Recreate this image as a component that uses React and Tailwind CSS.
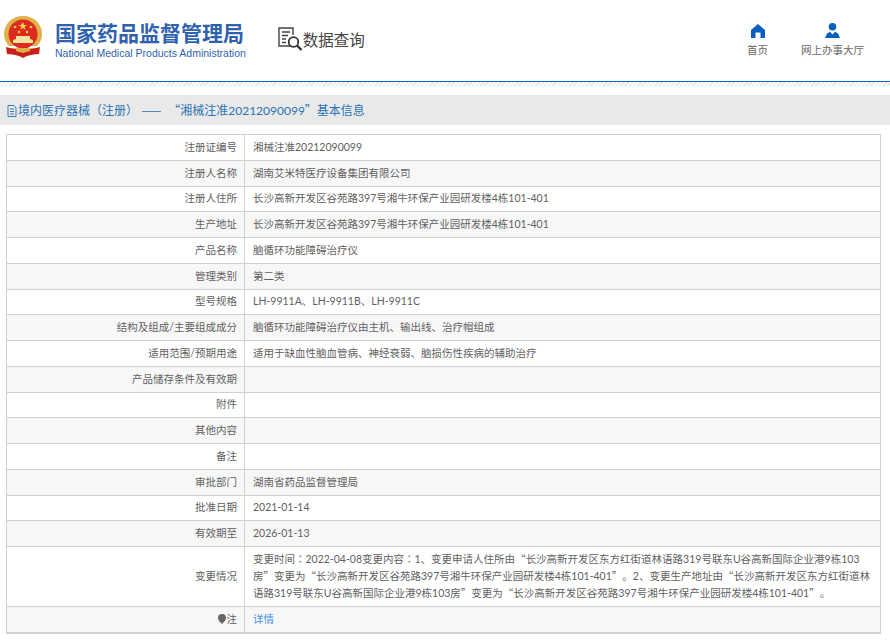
const font = { fontFamily: 'Lato, "Noto Sans CJK SC", sans-serif' };

const rows = [
  ["注册证编号", "湘械注准20212090099"],
  ["注册人名称", "湖南艾米特医疗设备集团有限公司"],
  ["注册人住所", "长沙高新开发区谷苑路397号湘牛环保产业园研发楼4栋101-401"],
  ["生产地址", "长沙高新开发区谷苑路397号湘牛环保产业园研发楼4栋101-401"],
  ["产品名称", "脑循环功能障碍治疗仪"],
  ["管理类别", "第二类"],
  ["型号规格", "LH-9911A、LH-9911B、LH-9911C"],
  ["结构及组成/主要组成成分", "脑循环功能障碍治疗仪由主机、输出线、治疗帽组成"],
  ["适用范围/预期用途", "适用于缺血性脑血管病、神经衰弱、脑损伤性疾病的辅助治疗"],
  ["产品储存条件及有效期", ""],
  ["附件", ""],
  ["其他内容", ""],
  ["备注", ""],
  ["审批部门", "湖南省药品监督管理局"],
  ["批准日期", "2021-01-14"],
  ["有效期至", "2026-01-13"],
];

// full width punctuation has to come from the CJK font, Lato's is narrow
function Cjk({ children }) {
  return <span className="font-['Noto_Sans_CJK_SC'] leading-none">{children}</span>;
}

function Colon() {
  return <span className="font-['Noto_Sans_CJK_TC'] leading-none">：</span>;
}

const changeText = (
  <>
    变更时间<Colon />2022-04-08变更内容<Colon />1、变更申请人住所由<Cjk>“</Cjk>长沙高新开发区东方红街道林语路319号联东U谷高新国际企业港9栋103房<Cjk>”</Cjk>变更为<Cjk>“</Cjk>长沙高新开发区谷苑路397号湘牛环保产业园研发楼4栋101-401<Cjk>”。</Cjk>2、变更生产地址由<Cjk>“</Cjk>长沙高新开发区东方红街道林语路319号联东U谷高新国际企业港9栋103房<Cjk>”</Cjk>变更为<Cjk>“</Cjk>长沙高新开发区谷苑路397号湘牛环保产业园研发楼4栋101-401<Cjk>”。</Cjk>
  </>
);

function Emblem() {
  return (
    <svg width="40" height="42" viewBox="0 0 40 42" className="shrink-0">
      <path d="M6 30C2 26 1 22 1 18 1 8 9 0 20 0s19 8 19 18c0 4-1 8-5 12z" fill="#e0b04a" />
      <circle cx="20" cy="18" r="14.500" fill="#dc2a1e" />
      <path d="M20 6l1 3h3l-2.400 1.800 1 3-2.600-1.800-2.600 1.800 1-3L15 9h3z" fill="#f5d04e" />
      <circle cx="12" cy="11" r="1.300" fill="#f5d04e" />
      <circle cx="28" cy="11" r="1.300" fill="#f5d04e" />
      <circle cx="16" cy="16" r="1.200" fill="#f5d04e" />
      <circle cx="24" cy="16" r="1.200" fill="#f5d04e" />
      <path d="M10 27h20v-3l-3-1v-3H13v3l-3 1z" fill="#f4e3a0" />
      <path d="M3 31c5 2 10 1 17 3 7-2 12-1 17-3l-1 7c-5 0-11 1-16 4-5-3-11-4-16-4z" fill="#c9201a" />
      <path d="M13 32h14v3l-7 2-7-2z" fill="#e0b04a" />
    </svg>
  );
}

function QueryIcon() {
  return (
    <svg width="25" height="25" viewBox="0 0 25 25" fill="none" className="shrink-0">
      <path d="M13 19H1V1h14v7" stroke="#444" strokeWidth="1.400" />
      <path d="M4 5h8M4 8.500h6M4 12h4M4 15.500h4" stroke="#444" strokeWidth="1.400" />
      <circle cx="15.500" cy="15" r="4.800" stroke="#333" strokeWidth="1.800" />
      <path d="M19 18.500l4.500 4.500" stroke="#333" strokeWidth="2.400" />
    </svg>
  );
}

function HomeIcon() {
  return (
    <svg width="14" height="14" viewBox="0 0 14 14">
      <path d="M7 0L14 6V14H9.500V8.500H4.500V14H0V6z" fill="#0b5fc1" />
    </svg>
  );
}

function PersonIcon() {
  return (
    <svg width="15" height="15" viewBox="0 0 15 15">
      <circle cx="7.500" cy="3.800" r="3.800" fill="#0b5fc1" />
      <path d="M0 15L2 10.500 5 8.800 7.500 11.500 10 8.800 13 10.500 15 15z" fill="#0b5fc1" />
    </svg>
  );
}

function DocIcon() {
  return (
    <svg width="10" height="12" viewBox="0 0 10 12" fill="none" className="shrink-0">
      <path d="M1 .5h6l2 2.500v8.500H1z" stroke="#3a7cb8" />
      <path d="M3 4h4M3 6.500h4M3 9h4" stroke="#3a7cb8" />
    </svg>
  );
}

function PinIcon() {
  return (
    <svg width="8" height="10" viewBox="0 0 8 10" className="mr-[1px] inline-block align-[-1px]">
      <path d="M4 0a4 4 0 014 4c0 2-2 4-4 6-2-2-4-4-4-6a4 4 0 014-4z" fill="#666" />
    </svg>
  );
}

function Row({ label, value, odd }) {
  return (
    <tr className={odd ? "h-[25.75px] bg-[#f7f7f7]" : "h-[25.75px] bg-white"}>
      <td className="border border-[#d0d0d0] pr-[7px] text-right align-middle">{label}</td>
      <td className="border border-[#d0d0d0] pl-[8px] pr-2 align-middle">{value}</td>
    </tr>
  );
}

export default function App() {
  return (
    <div className="h-[642px] w-[890px] overflow-hidden bg-white [text-spacing-trim:space-all]" style={font}>
      <header className="flex h-[82px] items-start border-b border-[#0b5fc1]">
        <div className="ml-[3px] mt-[16px]">
          <Emblem />
        </div>
        <div className="ml-[12px] mt-[19px]">
          <div className="font-['Noto_Sans_CJK_SC'] text-[21px] font-bold leading-[27px] text-[#2f62ad]">国家药品监督管理局</div>
          <div className="mt-[1px] font-['Liberation_Sans'] text-[10.5px] leading-[13px] text-[#2f62ad]">National Medical Products Administration</div>
        </div>
        <div className="ml-[32px] mt-[27px] flex items-center">
          <QueryIcon />
          <span className="text-[15.500px] leading-[22px] text-[#444]">数据查询</span>
        </div>
        <nav className="ml-auto mr-[26px] mt-[24px] flex text-[10.5px] text-[#666]">
          <div className="mr-[33px] flex flex-col items-center gap-[6px]">
            <HomeIcon />
            <span className="leading-[13px]">首页</span>
          </div>
          <div className="-mt-[1px] flex flex-col items-center gap-[6px]">
            <PersonIcon />
            <span className="leading-[13px]">网上办事大厅</span>
          </div>
        </nav>
      </header>
      <div className="h-[4px] bg-[repeating-linear-gradient(135deg,#e4e4e4_0,#e4e4e4_1px,#ffffff_1px,#ffffff_3px)]" />
      <div className="mt-[9px] flex h-[30px] items-center gap-[1px] bg-[#e9e9e9] pl-[7px] pt-[1px] text-[12px] text-[#2a73b5]">
        <DocIcon />
        <span>
          境内医疗器械<Cjk>（</Cjk>注册<Cjk>）</Cjk> <Cjk>——</Cjk>
          <span className="ml-[7px]">
            <Cjk>“</Cjk>
          </span>
          湘械注准20212090099<Cjk>”</Cjk>基本信息
        </span>
      </div>
      <div className="mt-[9px] pl-[6px] pr-[9px]">
        <table className="w-full table-fixed border-collapse text-[10.5px] leading-[17px] text-[#5f5f5f]">
          <colgroup>
            <col className="w-[238px]" />
            <col />
          </colgroup>
          <tbody>
            {rows.map(([label, value], i) => (
              <Row key={label} label={label} value={value} odd={i % 2 === 1} />
            ))}
            <tr className="bg-white">
              <td className="border border-[#d0d0d0] pr-[7px] text-right align-middle">变更情况</td>
              <td className="border border-[#d0d0d0] py-[4px] pl-[8px] pr-[8px] align-middle">{changeText}</td>
            </tr>
            <tr className="h-[26px] bg-[#f7f7f7]">
              <td className="border border-b-2 border-[#d0d0d0] pr-[7px] text-right">
                <PinIcon />注
              </td>
              <td className="border border-b-2 border-[#d0d0d0] pl-[8px] text-[#3f8fe8]">详情</td>
            </tr>
          </tbody>
        </table>
      </div>
    </div>
  );
}
